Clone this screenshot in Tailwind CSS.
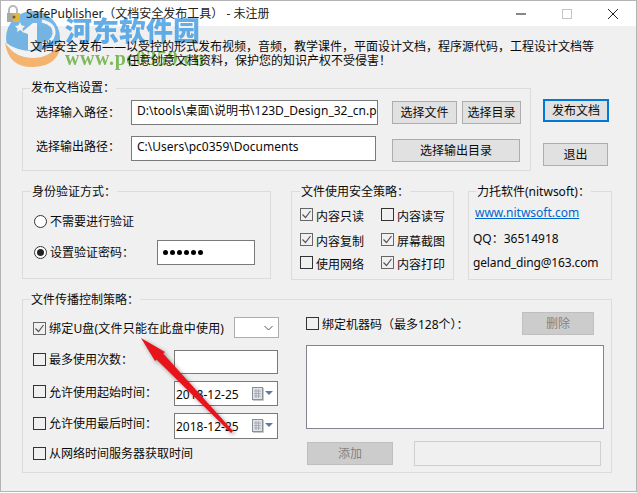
<!DOCTYPE html>
<html lang="zh-CN">
<head>
<meta charset="utf-8">
<script src="https://cdn.jsdelivr.net/npm/@tailwindcss/browser@4"></script>
</head>
<body class="m-0 bg-white">
<div class="relative w-[637px] h-[493px] overflow-hidden bg-white font-['Noto_Sans','Noto_Sans_CJK_SC',sans-serif] text-[12px] leading-[14px] text-[#0a0a0a]">
  <div class="w-[637px] h-[492px] border border-[#b4b4b4] bg-[#f0f0f0] flex flex-col">
    <!-- title bar -->
    <div class="h-[25px] bg-white flex items-center shrink-0">
      <svg class="relative z-10 ml-[3px] w-[18px] h-[18px]" viewBox="0 0 18 18"><path d="M5 8V5a4 4 0 0 1 8 0v3" fill="none" stroke="#b9b9b9" stroke-width="2"/><rect x="3" y="8" width="13" height="9" rx="1" fill="#e2b63c"/><rect x="3" y="8" width="6" height="9" fill="#a9a9a0"/><circle cx="10" cy="12" r="1.500" fill="#7a5c10"/></svg>
      <span class="relative z-10 ml-[4px] text-[#222]">SafePublisher（文档安全发布工具） - 未注册</span>
      <div class="ml-auto flex items-center">
        <svg class="w-[46px] h-[25px]" viewBox="0 0 46 25"><path d="M18 13h10" stroke="#111" stroke-width="1"/></svg>
        <svg class="w-[46px] h-[25px]" viewBox="0 0 46 25"><rect x="18.500" y="8.500" width="9" height="9" fill="none" stroke="#c4c4c4"/></svg>
        <svg class="w-[46px] h-[25px]" viewBox="0 0 46 25"><path d="M18 8l10 10M28 8l-10 10" stroke="#222" stroke-width="1"/></svg>
      </div>
    </div>
    <!-- description -->
    <div class="relative z-10 pl-[29px] pt-[14px] h-[62px] shrink-0 leading-[14px]">
      <p class="whitespace-nowrap">文档安全发布——以受控的形式发布视频，音频，教学课件，平面设计文档，程序源代码，工程设计文档等</p>
      <p class="whitespace-nowrap pl-[97px]">任意创意文档资料，保护您的知识产权不受侵害！</p>
    </div>
    <!-- row 1 -->
    <div class="flex items-start pl-[21px] shrink-0">
      <div class="relative w-[509px] h-[83px] border border-[#dcdcdc] pl-[13px] pt-[11px]">
        <span class="absolute left-[7px] -top-[8px] px-[1px] bg-[#f0f0f0]">发布文档设置：</span>
        <div class="flex items-start h-[25px]">
          <span class="w-[95px] mt-[6px]">选择输入路径：</span>
          <div class="w-[247px] h-[25px] border border-[#7a7a7a] bg-white pl-[5px] pb-[3px] flex items-center overflow-hidden whitespace-nowrap">D:\tools\桌面\说明书\123D_Design_32_cn.p</div>
          <button class="ml-[14px] mt-[1px] w-[65px] h-[23px] border border-[#adadad] bg-[#e1e1e1]">选择文件</button>
          <button class="ml-[5px] mt-[1px] w-[59px] h-[23px] border border-[#adadad] bg-[#e1e1e1]">选择目录</button>
        </div>
        <div class="flex items-start h-[25px] mt-[11px]">
          <span class="w-[95px] mt-[4px]">选择输出路径：</span>
          <div class="w-[245px] h-[25px] border border-[#7a7a7a] bg-white pl-[5px] pb-[3px] flex items-center">C:\Users\pc0359\Documents</div>
          <button class="ml-[16px] mt-[3px] w-[128px] h-[23px] border border-[#adadad] bg-[#e1e1e1]">选择输出目录</button>
        </div>
      </div>
      <div class="ml-[12px] mt-[11px] flex flex-col items-start">
        <button class="w-[66px] h-[23px] border-2 border-[#0078d7] bg-[#e1e1e1]">发布文档</button>
        <button class="mt-[21px] w-[65px] h-[23px] border border-[#adadad] bg-[#e1e1e1]">退出</button>
      </div>
    </div>
    <!-- row 2 -->
    <div class="flex items-start pl-[21px] mt-[20px] shrink-0">
      <div class="relative w-[249px] h-[88px] border border-[#dcdcdc] pl-[11px] pt-[22px]">
        <span class="absolute left-[8px] -top-[7px] px-[1px] bg-[#f0f0f0]">身份验证方式：</span>
        <div class="flex items-center gap-[3px] h-[14px]">
          <span class="w-[13px] h-[13px] rounded-full border border-[#333] bg-white"></span><span class="mt-[2px]">不需要进行验证</span>
        </div>
        <div class="flex items-center h-[25px] mt-[12px]">
          <span class="w-[13px] h-[13px] rounded-full border border-[#333] bg-white flex items-center justify-center"><span class="w-[7px] h-[7px] rounded-full bg-[#222]"></span></span>
          <span class="ml-[3px] w-[107px] mt-[1px]">设置验证密码：</span>
          <div class="w-[98px] h-[25px] border border-[#7a7a7a] bg-white pl-[5px] flex items-center gap-[2px]">
            <span class="w-[5px] h-[5px] rounded-full bg-black"></span><span class="w-[5px] h-[5px] rounded-full bg-black"></span><span class="w-[5px] h-[5px] rounded-full bg-black"></span><span class="w-[5px] h-[5px] rounded-full bg-black"></span><span class="w-[5px] h-[5px] rounded-full bg-black"></span><span class="w-[5px] h-[5px] rounded-full bg-black"></span>
          </div>
        </div>
      </div>
      <div class="relative ml-[20px] w-[163px] h-[89px] border border-[#dcdcdc] pl-[8px] pt-[16px]">
        <span class="absolute left-[8px] -top-[7px] px-[1px] bg-[#f0f0f0]">文件使用安全策略：</span>
        <div class="grid grid-cols-[81px_70px] grid-rows-[25px_23px_14px]">
          <div class="flex items-start gap-[3px]"><span class="w-[13px] h-[13px] border border-[#666] flex items-center justify-center"><svg class="w-[11px] h-[11px]" viewBox="0 0 11 11"><path d="M1.500 5.500l3 3 5-6.500" fill="none" stroke="#555" stroke-width="1.200"/></svg></span><span class="mt-[2px]">内容只读</span></div>
          <div class="flex items-start gap-[3px]"><span class="w-[13px] h-[13px] border border-[#333]"></span><span class="mt-[2px]">内容读写</span></div>
          <div class="flex items-start gap-[3px]"><span class="w-[13px] h-[13px] border border-[#666] flex items-center justify-center"><svg class="w-[11px] h-[11px]" viewBox="0 0 11 11"><path d="M1.500 5.500l3 3 5-6.500" fill="none" stroke="#555" stroke-width="1.200"/></svg></span><span class="mt-[2px]">内容复制</span></div>
          <div class="flex items-start gap-[3px]"><span class="w-[13px] h-[13px] border border-[#666] flex items-center justify-center"><svg class="w-[11px] h-[11px]" viewBox="0 0 11 11"><path d="M1.500 5.500l3 3 5-6.500" fill="none" stroke="#555" stroke-width="1.200"/></svg></span><span class="mt-[2px]">屏幕截图</span></div>
          <div class="flex items-start gap-[3px]"><span class="w-[13px] h-[13px] border border-[#333]"></span><span class="mt-[2px]">使用网络</span></div>
          <div class="flex items-start gap-[3px]"><span class="w-[13px] h-[13px] border border-[#666] flex items-center justify-center"><svg class="w-[11px] h-[11px]" viewBox="0 0 11 11"><path d="M1.500 5.500l3 3 5-6.500" fill="none" stroke="#555" stroke-width="1.200"/></svg></span><span class="mt-[2px]">内容打印</span></div>
        </div>
      </div>
      <div class="relative ml-[14px] w-[144px] h-[89px] border border-[#dcdcdc] pl-[4px] pt-[14px]">
        <span class="absolute left-[7px] -top-[7px] px-[1px] bg-[#f0f0f0] whitespace-nowrap">力托软件(nitwsoft)：</span>
        <a class="block ml-[2px] text-[#0066cc] underline">www.nitwsoft.com</a>
        <p class="mt-[12px] whitespace-nowrap">QQ：36514918</p>
        <p class="mt-[10px] whitespace-nowrap tracking-[-0.15px]">geland_ding@163.com</p>
      </div>
    </div>
    <!-- row 3 -->
    <div class="pl-[21px] mt-[19px] shrink-0">
      <div class="relative w-[590px] h-[174px] border border-[#dcdcdc] flex">
        <span class="absolute left-[7px] -top-[7px] px-[1px] bg-[#f0f0f0]">文件传播控制策略：</span>
        <!-- left col -->
        <div class="w-[283px] pl-[10px] pt-[17px] shrink-0">
          <div class="flex items-start h-[21px] w-[246px] justify-between">
            <div class="flex items-start gap-[3px] mt-[5px]"><span class="w-[13px] h-[13px] border border-[#666] flex items-center justify-center"><svg class="w-[11px] h-[11px]" viewBox="0 0 11 11"><path d="M1.500 5.500l3 3 5-6.500" fill="none" stroke="#555" stroke-width="1.200"/></svg></span><span class="whitespace-nowrap tracking-[0.2px]">绑定U盘(文件只能在此盘中使用)</span></div>
            <div class="w-[45px] h-[21px] border border-[#adadad] bg-white flex items-center justify-end pr-[5px]"><svg class="w-[9px] h-[6px]" viewBox="0 0 9 6"><path d="M0.500 1l4 4 4-4" fill="none" stroke="#555"/></svg></div>
          </div>
          <div class="flex items-start h-[24px] w-[245px] justify-between mt-[12px]">
            <div class="flex items-start gap-[3px] mt-[3px]"><span class="w-[13px] h-[13px] border border-[#333]"></span><span>最多使用次数：</span></div>
            <div class="w-[104px] h-[24px] border border-[#7a7a7a] bg-white"></div>
          </div>
          <div class="flex items-start h-[25px] w-[245px] justify-between mt-[7px]">
            <div class="flex items-start gap-[3px] mt-[4px]"><span class="w-[13px] h-[13px] border border-[#333]"></span><span class="mt-[1px]">允许使用起始时间：</span></div>
            <div class="w-[104px] h-[25px] border border-[#7a7a7a] bg-white flex items-center pl-[1px]"><span class="mt-[2px]">2018-12-25</span>
              <svg class="ml-auto mr-[4px] w-[22px] h-[14px]" viewBox="0 0 22 14"><rect x="1.500" y="0.500" width="10" height="12" fill="#dfe3e8" stroke="#8a8f99"/><path d="M3 4h7M3 6.500h7M3 9h7M5 2v9M7.500 2v9" stroke="#9aa0aa" stroke-width=".8"/><path d="M12.500 1v12.500H2" fill="none" stroke="#c8c8c8"/><path d="M14 4h8l-4 4z" fill="#5a7ba5"/></svg>
            </div>
          </div>
          <div class="flex items-start h-[26px] w-[245px] justify-between mt-[7px]">
            <div class="flex items-start gap-[3px] mt-[4px]"><span class="w-[13px] h-[13px] border border-[#333]"></span><span>允许使用最后时间：</span></div>
            <div class="w-[104px] h-[26px] border border-[#7a7a7a] bg-white flex items-center pl-[1px]"><span class="mt-[2px]">2018-12-25</span>
              <svg class="ml-auto mr-[4px] w-[22px] h-[14px]" viewBox="0 0 22 14"><rect x="1.500" y="0.500" width="10" height="12" fill="#dfe3e8" stroke="#8a8f99"/><path d="M3 4h7M3 6.500h7M3 9h7M5 2v9M7.500 2v9" stroke="#9aa0aa" stroke-width=".8"/><path d="M12.500 1v12.500H2" fill="none" stroke="#c8c8c8"/><path d="M14 4h8l-4 4z" fill="#5a7ba5"/></svg>
            </div>
          </div>
          <div class="flex items-start gap-[3px] mt-[8px]"><span class="w-[13px] h-[13px] border border-[#333]"></span><span>从网络时间服务器获取时间</span></div>
        </div>
        <!-- right col -->
        <div class="flex-1">
          <div class="flex items-start pt-[12px] h-[45px]">
            <div class="flex items-start gap-[3px] mt-[5px]"><span class="w-[13px] h-[13px] border border-[#333]"></span><span class="whitespace-nowrap mt-[1px]">绑定机器码（最多128个）：</span></div>
            <button class="ml-auto mr-[17px] w-[72px] h-[23px] border border-[#bfbfbf] bg-[#cccccc] text-[#838383]">删除</button>
          </div>
          <div class="w-[298px] h-[84px] border border-[#82858f] bg-white"></div>
          <div class="flex items-start mt-[13px] pl-[1px]">
            <button class="w-[86px] h-[23px] border border-[#bfbfbf] bg-[#cccccc] text-[#838383]">添加</button>
            <div class="ml-[21px] w-[187px] h-[25px] border border-[#cfcfcf] bg-[#f0f0f0] -mt-[1px]"></div>
          </div>
        </div>
      </div>
    </div>
  </div>
  <!-- watermark overlay -->
  <svg class="absolute left-0 top-0 w-[70px] h-[72px] opacity-80" viewBox="0 0 70 72">
    <circle cx="33" cy="38" r="27" fill="#55a6e0"/>
    <path d="M5 42 Q8 68 34 67 Q60 66 62 40 Q52 58 33 58 Q14 58 5 42Z" fill="#f5a550"/>
    <path d="M5 42 Q14 58 33 58 Q52 58 62 40 Q50 51 33 51 Q16 51 5 42Z" fill="#f3f3f3"/>
    <path d="M22 32 L33 23 L37 23 L37 50 L28 50 L28 34 Z" fill="#f3f3f3"/>
    <path d="M20 22 l1.500 3.500 3.500 .5 -2.500 2.500 .5 3.500 -3 -2 -3 2 .5 -3.500 -2.500 -2.500 3.500 -.5z" fill="#f3f3f3"/>
    <path d="M42 21 Q55 24 54 34 Q52 43 42 44" fill="none" stroke="#f3f3f3" stroke-width="3"/>
  </svg>
  <span class="absolute left-[65px] top-[14px] text-[27px] leading-[32px] font-black text-[#3d9be4] opacity-80 whitespace-nowrap font-['Noto_Sans_CJK_SC',sans-serif]">河东软件园</span>
  <span class="absolute left-[65px] top-[47px] text-[20px] leading-[22px] font-bold tracking-[0.6px] text-[#6bb043] opacity-85 whitespace-nowrap font-['Liberation_Serif',serif]">www.pc0359.cn</span>
  <!-- arrow -->
  <svg class="absolute z-20 left-0 top-0 w-[637px] h-[493px] pointer-events-none drop-shadow-[2px_2px_2px_rgba(0,0,0,0.4)]" viewBox="0 0 637 493">
    <path d="M233 431 L231 433 L155 358 L160 350 Z" fill="#e8141c"/>
    <path d="M141 338 L165 352 L155 361 Z" fill="#e8141c"/>
  </svg>
</div>
</body>
</html>
